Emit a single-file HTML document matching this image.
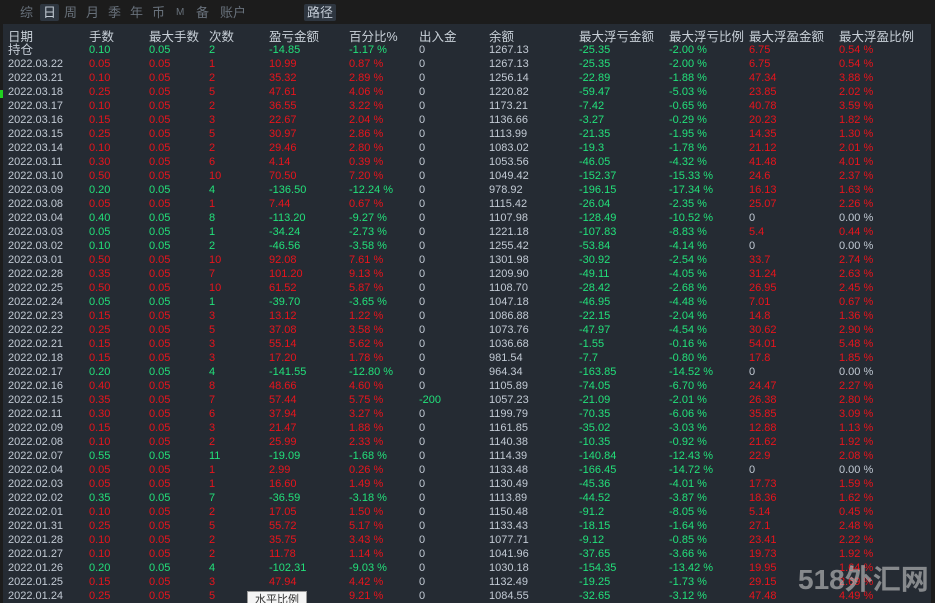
<!DOCTYPE html>
<html><head><meta charset="utf-8"><style>
html,body{overflow:hidden}
body{margin:0;width:935px;height:603px;overflow:hidden;background:#252b33;font-family:"Liberation Sans","Noto Sans CJK SC",sans-serif;font-size:11px;color:#c2cad4;position:relative}
.top{position:absolute;left:0;top:0;width:935px;height:24px;background:#1c1c1c}
.tab{position:absolute;top:4px;font-size:13px;color:#68717b;height:17px;line-height:17px}
.sel{background:#2e3640;color:#c2cad4;padding:0 3px;border-radius:2px}
.r{position:absolute;left:0;width:935px;height:14px;line-height:14px;white-space:nowrap}
.r span{position:absolute}
.h{font-size:12.5px;color:#c8d0d8}
.a{left:8px}.b{left:89px}.c{left:149px}.d{left:209px}.e{left:269px}.f{left:349px}.g{left:419px}.i{left:489px}.j{left:579px}.k{left:669px}.l{left:749px}.m{left:839px}
.R span.b,.R span.c,.R span.d,.R span.e,.R span.f{color:#e8141c}
.G span.b,.G span.c,.G span.d,.G span.e,.G span.f{color:#22e07a}
span.j,span.k{color:#22e07a}
span.l,span.m{color:#e8141c}
.z span.l,.z span.m{color:#c2cad4}
.h span{color:#c8d0d8!important}
</style></head><body>
<div class="top">
<span class="tab" style="left:20px">综</span><span class="tab sel" style="left:40px">日</span><span class="tab" style="left:64px">周</span><span class="tab" style="left:86px">月</span><span class="tab" style="left:108px">季</span><span class="tab" style="left:130px">年</span><span class="tab" style="left:152px">币</span><span class="tab" style="left:176px;font-size:10px">M</span><span class="tab" style="left:196px">备</span><span class="tab" style="left:220px">账户</span><span class="tab sel" style="left:304px">路径</span>
</div>
<div style="position:absolute;left:0;top:0;width:3px;height:603px;background:#1c1c1c"></div>
<div style="position:absolute;right:0;top:0;width:4px;height:603px;background:#1c1c1c"></div>
<div style="position:absolute;left:0;top:90px;width:3px;height:8px;background:#20d020"></div>
<div class="r h" style="top:30px"><span class="a">日期</span><span class="b">手数</span><span class="c">最大手数</span><span class="d">次数</span><span class="e">盈亏金额</span><span class="f">百分比%</span><span class="g">出入金</span><span class="i">余额</span><span class="j">最大浮亏金额</span><span class="k">最大浮亏比例</span><span class="l">最大浮盈金额</span><span class="m">最大浮盈比例</span></div>
<div class="r G" style="top:43px"><span class="a" style="font-size:12.5px">持仓</span><span class="b">0.10</span><span class="c">0.05</span><span class="d">2</span><span class="e">-14.85</span><span class="f">-1.17 %</span><span class="g">0</span><span class="i">1267.13</span><span class="j">-25.35</span><span class="k">-2.00 %</span><span class="l">6.75</span><span class="m">0.54 %</span></div>
<div class="r R" style="top:57px"><span class="a">2022.03.22</span><span class="b">0.05</span><span class="c">0.05</span><span class="d">1</span><span class="e">10.99</span><span class="f">0.87 %</span><span class="g">0</span><span class="i">1267.13</span><span class="j">-25.35</span><span class="k">-2.00 %</span><span class="l">6.75</span><span class="m">0.54 %</span></div>
<div class="r R" style="top:71px"><span class="a">2022.03.21</span><span class="b">0.10</span><span class="c">0.05</span><span class="d">2</span><span class="e">35.32</span><span class="f">2.89 %</span><span class="g">0</span><span class="i">1256.14</span><span class="j">-22.89</span><span class="k">-1.88 %</span><span class="l">47.34</span><span class="m">3.88 %</span></div>
<div class="r R" style="top:85px"><span class="a">2022.03.18</span><span class="b">0.25</span><span class="c">0.05</span><span class="d">5</span><span class="e">47.61</span><span class="f">4.06 %</span><span class="g">0</span><span class="i">1220.82</span><span class="j">-59.47</span><span class="k">-5.03 %</span><span class="l">23.85</span><span class="m">2.02 %</span></div>
<div class="r R" style="top:99px"><span class="a">2022.03.17</span><span class="b">0.10</span><span class="c">0.05</span><span class="d">2</span><span class="e">36.55</span><span class="f">3.22 %</span><span class="g">0</span><span class="i">1173.21</span><span class="j">-7.42</span><span class="k">-0.65 %</span><span class="l">40.78</span><span class="m">3.59 %</span></div>
<div class="r R" style="top:113px"><span class="a">2022.03.16</span><span class="b">0.15</span><span class="c">0.05</span><span class="d">3</span><span class="e">22.67</span><span class="f">2.04 %</span><span class="g">0</span><span class="i">1136.66</span><span class="j">-3.27</span><span class="k">-0.29 %</span><span class="l">20.23</span><span class="m">1.82 %</span></div>
<div class="r R" style="top:127px"><span class="a">2022.03.15</span><span class="b">0.25</span><span class="c">0.05</span><span class="d">5</span><span class="e">30.97</span><span class="f">2.86 %</span><span class="g">0</span><span class="i">1113.99</span><span class="j">-21.35</span><span class="k">-1.95 %</span><span class="l">14.35</span><span class="m">1.30 %</span></div>
<div class="r R" style="top:141px"><span class="a">2022.03.14</span><span class="b">0.10</span><span class="c">0.05</span><span class="d">2</span><span class="e">29.46</span><span class="f">2.80 %</span><span class="g">0</span><span class="i">1083.02</span><span class="j">-19.3</span><span class="k">-1.78 %</span><span class="l">21.12</span><span class="m">2.01 %</span></div>
<div class="r R" style="top:155px"><span class="a">2022.03.11</span><span class="b">0.30</span><span class="c">0.05</span><span class="d">6</span><span class="e">4.14</span><span class="f">0.39 %</span><span class="g">0</span><span class="i">1053.56</span><span class="j">-46.05</span><span class="k">-4.32 %</span><span class="l">41.48</span><span class="m">4.01 %</span></div>
<div class="r R" style="top:169px"><span class="a">2022.03.10</span><span class="b">0.50</span><span class="c">0.05</span><span class="d">10</span><span class="e">70.50</span><span class="f">7.20 %</span><span class="g">0</span><span class="i">1049.42</span><span class="j">-152.37</span><span class="k">-15.33 %</span><span class="l">24.6</span><span class="m">2.37 %</span></div>
<div class="r G" style="top:183px"><span class="a">2022.03.09</span><span class="b">0.20</span><span class="c">0.05</span><span class="d">4</span><span class="e">-136.50</span><span class="f">-12.24 %</span><span class="g">0</span><span class="i">978.92</span><span class="j">-196.15</span><span class="k">-17.34 %</span><span class="l">16.13</span><span class="m">1.63 %</span></div>
<div class="r R" style="top:197px"><span class="a">2022.03.08</span><span class="b">0.05</span><span class="c">0.05</span><span class="d">1</span><span class="e">7.44</span><span class="f">0.67 %</span><span class="g">0</span><span class="i">1115.42</span><span class="j">-26.04</span><span class="k">-2.35 %</span><span class="l">25.07</span><span class="m">2.26 %</span></div>
<div class="r G z" style="top:211px"><span class="a">2022.03.04</span><span class="b">0.40</span><span class="c">0.05</span><span class="d">8</span><span class="e">-113.20</span><span class="f">-9.27 %</span><span class="g">0</span><span class="i">1107.98</span><span class="j">-128.49</span><span class="k">-10.52 %</span><span class="l">0</span><span class="m">0.00 %</span></div>
<div class="r G" style="top:225px"><span class="a">2022.03.03</span><span class="b">0.05</span><span class="c">0.05</span><span class="d">1</span><span class="e">-34.24</span><span class="f">-2.73 %</span><span class="g">0</span><span class="i">1221.18</span><span class="j">-107.83</span><span class="k">-8.83 %</span><span class="l">5.4</span><span class="m">0.44 %</span></div>
<div class="r G z" style="top:239px"><span class="a">2022.03.02</span><span class="b">0.10</span><span class="c">0.05</span><span class="d">2</span><span class="e">-46.56</span><span class="f">-3.58 %</span><span class="g">0</span><span class="i">1255.42</span><span class="j">-53.84</span><span class="k">-4.14 %</span><span class="l">0</span><span class="m">0.00 %</span></div>
<div class="r R" style="top:253px"><span class="a">2022.03.01</span><span class="b">0.50</span><span class="c">0.05</span><span class="d">10</span><span class="e">92.08</span><span class="f">7.61 %</span><span class="g">0</span><span class="i">1301.98</span><span class="j">-30.92</span><span class="k">-2.54 %</span><span class="l">33.7</span><span class="m">2.74 %</span></div>
<div class="r R" style="top:267px"><span class="a">2022.02.28</span><span class="b">0.35</span><span class="c">0.05</span><span class="d">7</span><span class="e">101.20</span><span class="f">9.13 %</span><span class="g">0</span><span class="i">1209.90</span><span class="j">-49.11</span><span class="k">-4.05 %</span><span class="l">31.24</span><span class="m">2.63 %</span></div>
<div class="r R" style="top:281px"><span class="a">2022.02.25</span><span class="b">0.50</span><span class="c">0.05</span><span class="d">10</span><span class="e">61.52</span><span class="f">5.87 %</span><span class="g">0</span><span class="i">1108.70</span><span class="j">-28.42</span><span class="k">-2.68 %</span><span class="l">26.95</span><span class="m">2.45 %</span></div>
<div class="r G" style="top:295px"><span class="a">2022.02.24</span><span class="b">0.05</span><span class="c">0.05</span><span class="d">1</span><span class="e">-39.70</span><span class="f">-3.65 %</span><span class="g">0</span><span class="i">1047.18</span><span class="j">-46.95</span><span class="k">-4.48 %</span><span class="l">7.01</span><span class="m">0.67 %</span></div>
<div class="r R" style="top:309px"><span class="a">2022.02.23</span><span class="b">0.15</span><span class="c">0.05</span><span class="d">3</span><span class="e">13.12</span><span class="f">1.22 %</span><span class="g">0</span><span class="i">1086.88</span><span class="j">-22.15</span><span class="k">-2.04 %</span><span class="l">14.8</span><span class="m">1.36 %</span></div>
<div class="r R" style="top:323px"><span class="a">2022.02.22</span><span class="b">0.25</span><span class="c">0.05</span><span class="d">5</span><span class="e">37.08</span><span class="f">3.58 %</span><span class="g">0</span><span class="i">1073.76</span><span class="j">-47.97</span><span class="k">-4.54 %</span><span class="l">30.62</span><span class="m">2.90 %</span></div>
<div class="r R" style="top:337px"><span class="a">2022.02.21</span><span class="b">0.15</span><span class="c">0.05</span><span class="d">3</span><span class="e">55.14</span><span class="f">5.62 %</span><span class="g">0</span><span class="i">1036.68</span><span class="j">-1.55</span><span class="k">-0.16 %</span><span class="l">54.01</span><span class="m">5.48 %</span></div>
<div class="r R" style="top:351px"><span class="a">2022.02.18</span><span class="b">0.15</span><span class="c">0.05</span><span class="d">3</span><span class="e">17.20</span><span class="f">1.78 %</span><span class="g">0</span><span class="i">981.54</span><span class="j">-7.7</span><span class="k">-0.80 %</span><span class="l">17.8</span><span class="m">1.85 %</span></div>
<div class="r G z" style="top:365px"><span class="a">2022.02.17</span><span class="b">0.20</span><span class="c">0.05</span><span class="d">4</span><span class="e">-141.55</span><span class="f">-12.80 %</span><span class="g">0</span><span class="i">964.34</span><span class="j">-163.85</span><span class="k">-14.52 %</span><span class="l">0</span><span class="m">0.00 %</span></div>
<div class="r R" style="top:379px"><span class="a">2022.02.16</span><span class="b">0.40</span><span class="c">0.05</span><span class="d">8</span><span class="e">48.66</span><span class="f">4.60 %</span><span class="g">0</span><span class="i">1105.89</span><span class="j">-74.05</span><span class="k">-6.70 %</span><span class="l">24.47</span><span class="m">2.27 %</span></div>
<div class="r R" style="top:393px"><span class="a">2022.02.15</span><span class="b">0.35</span><span class="c">0.05</span><span class="d">7</span><span class="e">57.44</span><span class="f">5.75 %</span><span class="g" style="color:#22e07a">-200</span><span class="i">1057.23</span><span class="j">-21.09</span><span class="k">-2.01 %</span><span class="l">26.38</span><span class="m">2.80 %</span></div>
<div class="r R" style="top:407px"><span class="a">2022.02.11</span><span class="b">0.30</span><span class="c">0.05</span><span class="d">6</span><span class="e">37.94</span><span class="f">3.27 %</span><span class="g">0</span><span class="i">1199.79</span><span class="j">-70.35</span><span class="k">-6.06 %</span><span class="l">35.85</span><span class="m">3.09 %</span></div>
<div class="r R" style="top:421px"><span class="a">2022.02.09</span><span class="b">0.15</span><span class="c">0.05</span><span class="d">3</span><span class="e">21.47</span><span class="f">1.88 %</span><span class="g">0</span><span class="i">1161.85</span><span class="j">-35.02</span><span class="k">-3.03 %</span><span class="l">12.88</span><span class="m">1.13 %</span></div>
<div class="r R" style="top:435px"><span class="a">2022.02.08</span><span class="b">0.10</span><span class="c">0.05</span><span class="d">2</span><span class="e">25.99</span><span class="f">2.33 %</span><span class="g">0</span><span class="i">1140.38</span><span class="j">-10.35</span><span class="k">-0.92 %</span><span class="l">21.62</span><span class="m">1.92 %</span></div>
<div class="r G" style="top:449px"><span class="a">2022.02.07</span><span class="b">0.55</span><span class="c">0.05</span><span class="d">11</span><span class="e">-19.09</span><span class="f">-1.68 %</span><span class="g">0</span><span class="i">1114.39</span><span class="j">-140.84</span><span class="k">-12.43 %</span><span class="l">22.9</span><span class="m">2.08 %</span></div>
<div class="r R z" style="top:463px"><span class="a">2022.02.04</span><span class="b">0.05</span><span class="c">0.05</span><span class="d">1</span><span class="e">2.99</span><span class="f">0.26 %</span><span class="g">0</span><span class="i">1133.48</span><span class="j">-166.45</span><span class="k">-14.72 %</span><span class="l">0</span><span class="m">0.00 %</span></div>
<div class="r R" style="top:477px"><span class="a">2022.02.03</span><span class="b">0.05</span><span class="c">0.05</span><span class="d">1</span><span class="e">16.60</span><span class="f">1.49 %</span><span class="g">0</span><span class="i">1130.49</span><span class="j">-45.36</span><span class="k">-4.01 %</span><span class="l">17.73</span><span class="m">1.59 %</span></div>
<div class="r G" style="top:491px"><span class="a">2022.02.02</span><span class="b">0.35</span><span class="c">0.05</span><span class="d">7</span><span class="e">-36.59</span><span class="f">-3.18 %</span><span class="g">0</span><span class="i">1113.89</span><span class="j">-44.52</span><span class="k">-3.87 %</span><span class="l">18.36</span><span class="m">1.62 %</span></div>
<div class="r R" style="top:505px"><span class="a">2022.02.01</span><span class="b">0.10</span><span class="c">0.05</span><span class="d">2</span><span class="e">17.05</span><span class="f">1.50 %</span><span class="g">0</span><span class="i">1150.48</span><span class="j">-91.2</span><span class="k">-8.05 %</span><span class="l">5.14</span><span class="m">0.45 %</span></div>
<div class="r R" style="top:519px"><span class="a">2022.01.31</span><span class="b">0.25</span><span class="c">0.05</span><span class="d">5</span><span class="e">55.72</span><span class="f">5.17 %</span><span class="g">0</span><span class="i">1133.43</span><span class="j">-18.15</span><span class="k">-1.64 %</span><span class="l">27.1</span><span class="m">2.48 %</span></div>
<div class="r R" style="top:533px"><span class="a">2022.01.28</span><span class="b">0.10</span><span class="c">0.05</span><span class="d">2</span><span class="e">35.75</span><span class="f">3.43 %</span><span class="g">0</span><span class="i">1077.71</span><span class="j">-9.12</span><span class="k">-0.85 %</span><span class="l">23.41</span><span class="m">2.22 %</span></div>
<div class="r R" style="top:547px"><span class="a">2022.01.27</span><span class="b">0.10</span><span class="c">0.05</span><span class="d">2</span><span class="e">11.78</span><span class="f">1.14 %</span><span class="g">0</span><span class="i">1041.96</span><span class="j">-37.65</span><span class="k">-3.66 %</span><span class="l">19.73</span><span class="m">1.92 %</span></div>
<div class="r G" style="top:561px"><span class="a">2022.01.26</span><span class="b">0.20</span><span class="c">0.05</span><span class="d">4</span><span class="e">-102.31</span><span class="f">-9.03 %</span><span class="g">0</span><span class="i">1030.18</span><span class="j">-154.35</span><span class="k">-13.42 %</span><span class="l">19.95</span><span class="m">1.64 %</span></div>
<div class="r R" style="top:575px"><span class="a">2022.01.25</span><span class="b">0.15</span><span class="c">0.05</span><span class="d">3</span><span class="e">47.94</span><span class="f">4.42 %</span><span class="g">0</span><span class="i">1132.49</span><span class="j">-19.25</span><span class="k">-1.73 %</span><span class="l">29.15</span><span class="m">2.69 %</span></div>
<div class="r R" style="top:589px"><span class="a">2022.01.24</span><span class="b">0.25</span><span class="c">0.05</span><span class="d">5</span><span class="e">90.66</span><span class="f">9.21 %</span><span class="g">0</span><span class="i">1084.55</span><span class="j">-32.65</span><span class="k">-3.12 %</span><span class="l">47.48</span><span class="m">4.49 %</span></div>
<div style="position:absolute;left:247px;top:591px;width:58px;height:12px;background:#f4f4f4;border:1px solid #999;border-bottom:0;color:#333;font-size:11px;line-height:16px;text-align:center;overflow:hidden">水平比例</div>
<div style="position:absolute;left:798px;top:558px;white-space:nowrap;font-size:28px;font-weight:bold;color:rgba(200,200,200,0.6);font-family:'Liberation Sans','Noto Sans CJK SC',sans-serif">518外汇网</div>
</body></html>
